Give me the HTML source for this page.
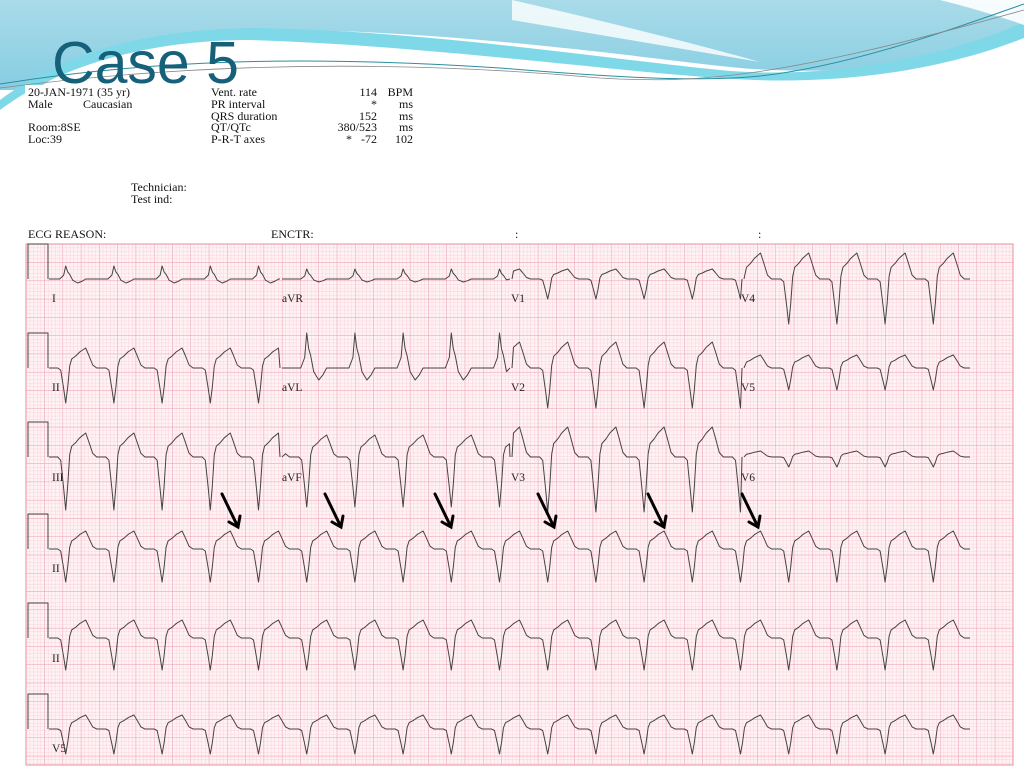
<!DOCTYPE html>
<html><head><meta charset="utf-8">
<style>
html,body{margin:0;padding:0;width:1024px;height:768px;overflow:hidden;background:#fff;}
svg{position:absolute;left:0;top:0;}
.t{font-family:"Liberation Serif",serif;font-size:12px;fill:#111;}
.lbl{font-family:"Liberation Serif",serif;font-size:11.5px;fill:#222;}
</style></head>
<body>
<svg id="s" width="1024" height="768" viewBox="0 0 1024 768" xmlns="http://www.w3.org/2000/svg">
<defs>
<linearGradient id="bg" x1="0" y1="0" x2="0" y2="1">
<stop offset="0" stop-color="#a9dbe8"/><stop offset="1" stop-color="#86cde3"/></linearGradient>
<pattern id="minor" x="26" y="244" width="3.656" height="3.656" patternUnits="userSpaceOnUse">
<path d="M0 0H3.656M0 0V3.656" stroke="#f7c9d3" stroke-width="0.7" fill="none"/></pattern>
<pattern id="major" x="26" y="244" width="18.28" height="18.28" patternUnits="userSpaceOnUse">
<path d="M0 0H18.28M0 0V18.28" stroke="#ec9fb0" stroke-width="0.9" fill="none"/></pattern>
</defs>
<!-- banner -->
<path d="M0 0H1024V30C930 75 800 75 720 66C600 52 420 28 250 30C150 32 80 60 35 90L0 90Z" fill="url(#bg)"/>
<path d="M0 100C60 55 140 30 250 28C420 30 600 58 720 70C820 80 940 60 1024 22V38C930 75 820 86 720 78C600 70 420 45 250 40C150 40 60 65 0 110Z" fill="#7fd8e8"/>
<path d="M512 0C600 20 700 45 760 62L512 20Z" fill="#ffffff" opacity="0.8"/>
<path d="M940 0C980 10 1010 20 1024 25V0Z" fill="#ffffff" opacity="0.9"/>
<path d="M0 84C150 60 300 55 500 68C620 78 700 82 760 76C850 66 950 30 1024 4" stroke="#2a8fa0" stroke-width="1" fill="none"/>
<path d="M0 88C200 62 400 60 600 78C700 84 780 78 1024 10" stroke="#888" stroke-width="0.8" fill="none"/>
<!-- white panel -->
<rect x="25" y="85" width="990" height="683" fill="#fff"/>
<text x="52" y="83" font-family="Liberation Sans,sans-serif" font-size="59" fill="#17607a">Case 5</text>
<!-- header text -->
<g class="t">
<text x="28" y="96">20-JAN-1971 (35 yr)</text>
<text x="28" y="108">Male</text><text x="83" y="108">Caucasian</text>
<text x="28" y="131">Room:8SE</text>
<text x="28" y="143">Loc:39</text>
<text x="211" y="96">Vent. rate</text>
<text x="211" y="108">PR interval</text>
<text x="211" y="120">QRS duration</text>
<text x="211" y="131">QT/QTc</text>
<text x="211" y="143">P-R-T axes</text>
<text x="377" y="96" text-anchor="end">114</text>
<text x="377" y="108" text-anchor="end">*</text>
<text x="377" y="120" text-anchor="end">152</text>
<text x="377" y="131" text-anchor="end">380/523</text>
<text x="377" y="143" text-anchor="end">*&#160;&#160; -72</text>
<text x="413" y="96" text-anchor="end">BPM</text>
<text x="413" y="108" text-anchor="end">ms</text>
<text x="413" y="120" text-anchor="end">ms</text>
<text x="413" y="131" text-anchor="end">ms</text>
<text x="413" y="143" text-anchor="end">102</text>
<text x="131" y="191">Technician:</text>
<text x="131" y="203">Test ind:</text>
<text x="28" y="238">ECG REASON:</text>
<text x="271" y="238">ENCTR:</text>
<text x="515" y="238">:</text>
<text x="758" y="238">:</text>
</g>
<!-- grid -->
<rect x="26" y="244" width="987" height="521" fill="#fff2f5"/>
<rect x="26" y="244" width="987" height="521" fill="url(#minor)"/>
<rect x="26" y="244" width="987" height="521" fill="url(#major)"/>
<rect x="26" y="244" width="987" height="521" fill="none" stroke="#e88ea0" stroke-width="1"/>
<g id="waves" fill="none" stroke="#444" stroke-width="1" stroke-linejoin="round"></g>
<g class="lbl">
<text x="52" y="302">I</text><text x="282" y="302">aVR</text><text x="511" y="302">V1</text><text x="741" y="302">V4</text>
<text x="52" y="391">II</text><text x="282" y="391">aVL</text><text x="511" y="391">V2</text><text x="741" y="391">V5</text>
<text x="52" y="481">III</text><text x="282" y="481">aVF</text><text x="511" y="481">V3</text><text x="741" y="481">V6</text>
<text x="52" y="572">II</text><text x="52" y="662">II</text><text x="52" y="752">V5</text>
</g>
<g id="arrows" stroke="#000" stroke-width="3" fill="none" stroke-linecap="round"></g>
</svg>
<script>
(function(){
var NS="http://www.w3.org/2000/svg";
var W=document.getElementById('waves'),A=document.getElementById('arrows');
function neg(s,h){return [[-8,0],[-5,0.06*s],[-2,0.6*s],[0,s],[2,0.55*s],[4,-0.1*h],[6,-0.45*h],[10,-0.6*h],[14,-0.8*h],[20,-h],[23,-0.65*h],[27,-0.15*h],[31,0],[40,0]];}
function pos(r,d){return [[-6,0],[-2,-0.3*r],[0,-r],[2,-0.55*r],[4,-0.35*r],[7,0.3*d],[12,d],[16,0.6*d],[20,0],[40,0]];}
function trace(x0,x1,base,tpl){
  var pts=[[x0,base]];
  for(var n=-2;n<25;n++){var t=65.7+n*48.2;
    for(var i=0;i<tpl.length;i++){var x=t+tpl[i][0];if(x>x0&&x<x1)pts.push([x,base+tpl[i][1]]);}}
  pts.push([x1,base]);
  var d="M"+pts.map(function(p){return p[0].toFixed(1)+" "+p[1].toFixed(1)}).join("L");
  var p=document.createElementNS(NS,"path");p.setAttribute("d",d);W.appendChild(p);
}
var B=[279,368,457,549,638,729];
B.forEach(function(b){var p=document.createElementNS(NS,"path");
 p.setAttribute("d","M28 "+b+"V"+(b-35)+"H48V"+b);W.appendChild(p);});
var segs=[[49,280],[282,510],[512,742],[744,970]];
var rows=[[pos(13,4),pos(10,3),neg(20,10),neg(45,26)],
          [neg(35,20),pos(35,12),neg(40,26),neg(22,13)],
          [neg(53,24),neg(50,22),neg(55,30),neg(10,6)]];
for(var r=0;r<3;r++)for(var c=0;c<4;c++)trace(segs[c][0],segs[c][1],B[r],rows[r][c]);
trace(49,970,B[3],neg(33,18));
trace(49,970,B[4],neg(32,18));
trace(49,970,B[5],neg(25,14));
[222,325,435,538,648,742].forEach(function(x){
 var p=document.createElementNS(NS,"path");
 p.setAttribute("d","M"+x+" 494L"+(x+16)+" 527M"+(x+7)+" 522L"+(x+16)+" 527L"+(x+18)+" 516");
 A.appendChild(p);});
})();
</script>
</body></html>
